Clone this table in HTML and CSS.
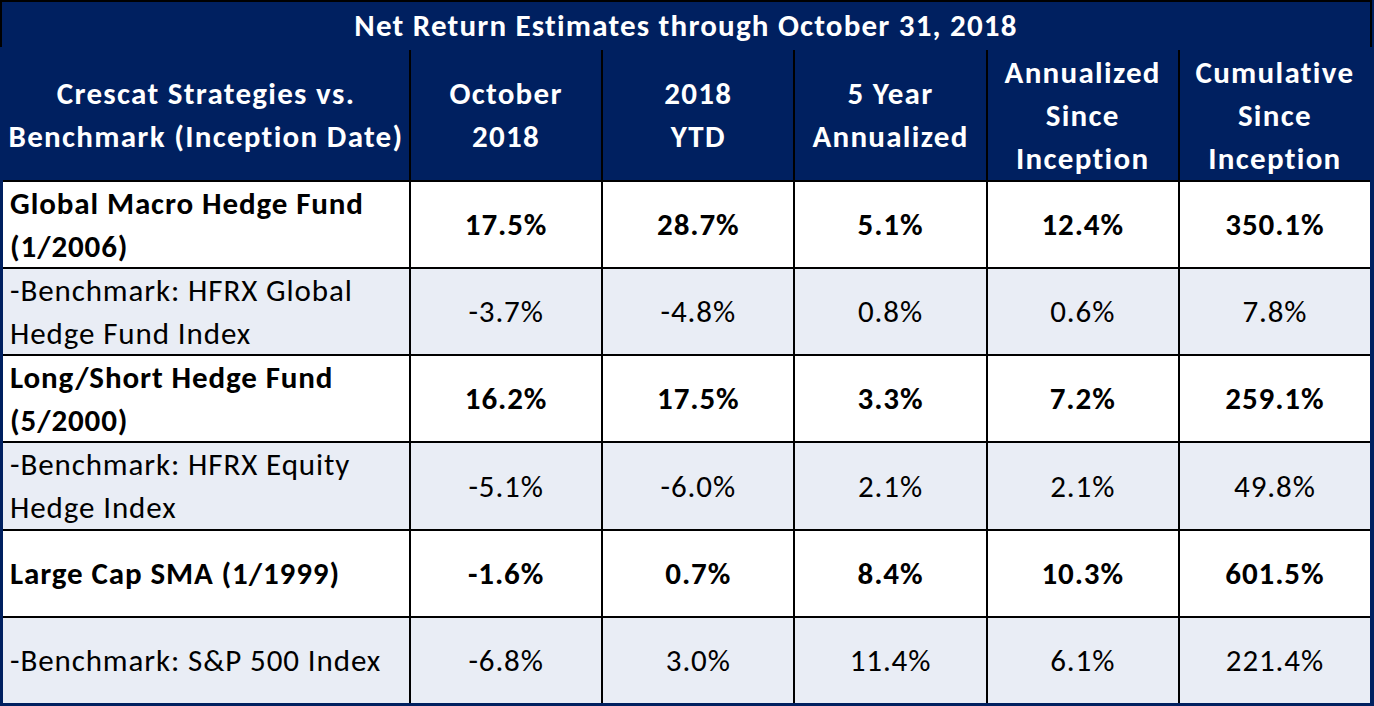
FILE: index.html
```html
<!DOCTYPE html>
<html>
<head>
<meta charset="utf-8">
<link rel="stylesheet" href="styles.css">
</head>
<body>
<div class="sheet">
  <div class="title">Net Return Estimates through October 31, 2018</div>
  <div class="grid">
    <div class="cell head">Crescat Strategies vs.<br>Benchmark (Inception Date)</div>
    <div class="cell head">October<br>2018</div>
    <div class="cell head">2018<br>YTD</div>
    <div class="cell head">5 Year<br>Annualized</div>
    <div class="cell head">Annualized<br>Since<br>Inception</div>
    <div class="cell head">Cumulative<br>Since<br>Inception</div>

    <div class="cell label strong">Global Macro Hedge Fund<br>(1/2006)</div>
    <div class="cell num strong">17.5%</div>
    <div class="cell num strong">28.7%</div>
    <div class="cell num strong">5.1%</div>
    <div class="cell num strong">12.4%</div>
    <div class="cell num strong">350.1%</div>

    <div class="cell label alt">-Benchmark: HFRX Global<br>Hedge Fund Index</div>
    <div class="cell num alt">-3.7%</div>
    <div class="cell num alt">-4.8%</div>
    <div class="cell num alt">0.8%</div>
    <div class="cell num alt">0.6%</div>
    <div class="cell num alt">7.8%</div>

    <div class="cell label strong">Long/Short Hedge Fund<br>(5/2000)</div>
    <div class="cell num strong">16.2%</div>
    <div class="cell num strong">17.5%</div>
    <div class="cell num strong">3.3%</div>
    <div class="cell num strong">7.2%</div>
    <div class="cell num strong">259.1%</div>

    <div class="cell label alt">-Benchmark: HFRX Equity<br>Hedge Index</div>
    <div class="cell num alt">-5.1%</div>
    <div class="cell num alt">-6.0%</div>
    <div class="cell num alt">2.1%</div>
    <div class="cell num alt">2.1%</div>
    <div class="cell num alt">49.8%</div>

    <div class="cell label strong">Large Cap SMA (1/1999)</div>
    <div class="cell num strong">-1.6%</div>
    <div class="cell num strong">0.7%</div>
    <div class="cell num strong">8.4%</div>
    <div class="cell num strong">10.3%</div>
    <div class="cell num strong">601.5%</div>

    <div class="cell label alt">-Benchmark: S&amp;P 500 Index</div>
    <div class="cell num alt">-6.8%</div>
    <div class="cell num alt">3.0%</div>
    <div class="cell num alt">11.4%</div>
    <div class="cell num alt">6.1%</div>
    <div class="cell num alt">221.4%</div>
  </div>
</div>
</body>
</html>
```
FILE: styles.css
```css
html, body {
  margin: 0;
  padding: 0;
  background: #ffffff;
}
body {
  font-family: Carlito, Calibri, Lato, "Liberation Sans", sans-serif;
  font-size: 31px;
  letter-spacing: 0.9px;
  color: #000;
}
.sheet {
  width: 1374px;
  height: 706px;
  box-sizing: border-box;
  background: #002060;
  display: flex;
  flex-direction: column;
}
.title {
  flex: 0 0 47px;
  height: 47px;
  box-sizing: border-box;
  border-top: 2px solid #000;
  border-left: 2px solid #000;
  border-right: 2px solid #000;
  margin-right: 2px;
  color: #fff;
  font-weight: bold;
  letter-spacing: 1.2px;
  display: flex;
  align-items: center;
  justify-content: center;
  line-height: 1;
  padding-top: 2px;
}
.grid {
  margin: 3px 4px 3px 3px;
  flex: 1 1 0;
  min-height: 0;
  display: grid;
  grid-template-columns: 406px repeat(5, minmax(0, 1fr));
  grid-template-rows: 130px repeat(6, minmax(0, 1fr));
  gap: 2px;
  background: #000;
}
.cell {
  display: flex;
  align-items: center;
  line-height: 43px;
  background: #fff;
  overflow: visible;
}
.head {
  background: #002060;
  color: #fff;
  font-weight: bold;
  letter-spacing: 1.3px;
  justify-content: center;
  text-align: center;
}
.label {
  padding-left: 7px;
}
.num {
  justify-content: center;
}
.strong {
  font-weight: bold;
}
.alt {
  background: #e9edf5;
}
```
